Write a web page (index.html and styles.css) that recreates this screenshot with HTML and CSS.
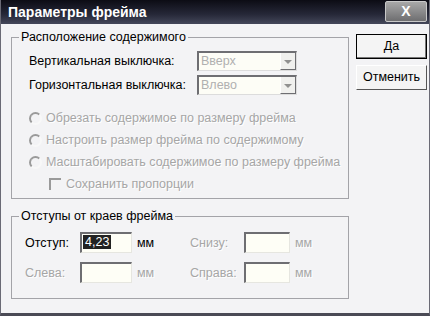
FILE: index.html
```html
<!DOCTYPE html>
<html lang="ru">
<head>
  <meta charset="UTF-8">
  <title>Параметры фрейма</title>
  <link rel="stylesheet" href="styles.css">
</head>
<body>
  <div class="window">
    <div class="titlebar">
      <span class="title">Параметры фрейма</span>
      <div class="close">X</div>
    </div>

    <div class="content">
      <div class="main">
        <fieldset class="group group-pos">
          <legend>Расположение содержимого</legend>
          <div class="row">
            <span class="label">Вертикальная выключка:</span>
            <div class="select"><span class="value">Вверх</span><span class="arrow"></span></div>
          </div>
          <div class="row">
            <span class="label">Горизонтальная выключка:</span>
            <div class="select"><span class="value">Влево</span><span class="arrow"></span></div>
          </div>
          <div class="option first"><span class="radio"></span>Обрезать содержимое по размеру фрейма</div>
          <div class="option"><span class="radio"></span>Настроить размер фрейма по содержимому</div>
          <div class="option"><span class="radio"></span>Масштабировать содержимое по размеру фрейма</div>
          <div class="option sub"><span class="check"></span>Сохранить пропорции</div>
        </fieldset>

        <fieldset class="group group-margins">
          <legend>Отступы от краев фрейма</legend>
          <div class="margins">
            <span class="active">Отступ:</span>
            <div class="field"><span class="sel">4,23</span></div>
            <span class="unit active">мм</span>
            <span>Снизу:</span>
            <div class="field"></div>
            <span class="unit">мм</span>

            <span>Слева:</span>
            <div class="field"></div>
            <span class="unit">мм</span>
            <span>Справа:</span>
            <div class="field"></div>
            <span class="unit">мм</span>
          </div>
        </fieldset>
      </div>

      <div class="buttons">
        <div class="btn default">Да</div>
        <div class="btn">Отменить</div>
      </div>
    </div>
  </div>
</body>
</html>
```

FILE: styles.css
```css
body {
  margin: 0;
  font-family: 'Liberation Sans', Arial, sans-serif;
  font-size: 12.5px;
  color: #000;
}

.window {
  width: 430px;
  height: 316px;
  box-sizing: border-box;
  background-color: #f3f3f5;
  border-bottom: 3px solid #4a4a55;
  border-left: 1px solid #6a6a75;
  border-right: 1px solid #6a6a75;
}

.titlebar {
  height: 24px;
  display: flex;
  align-items: center;
  justify-content: space-between;
  padding: 0 2px 0 7px;
  background: linear-gradient(#0c0c14, #262838 60%, #44475a);
}

.title {
  color: #fff;
  font-weight: bold;
  font-size: 14px;
}

.close {
  width: 40px;
  height: 19px;
  margin-top: -2px;
  border: 1px solid #c8c8c8;
  border-radius: 2px;
  background: linear-gradient(#a8a8a8, #6e6e70);
  color: #fff;
  font-weight: bold;
  font-size: 14px;
  text-align: center;
  line-height: 19px;
}

.content {
  display: flex;
  padding: 6px 0 0 10px;
}

.main {
  width: 338px;
}

.group {
  margin: 0;
  border: 1px solid #a3a3a8;
  padding: 0 0 0 17px;
}

.group legend {
  padding: 0 2px;
  margin-left: -10px;
  line-height: 15px;
}

.group-pos {
  height: 169px;
  box-sizing: border-box;
  padding-top: 6px;
}

.row {
  display: flex;
  align-items: center;
  height: 20px;
  margin-bottom: 4px;
}

.label {
  width: 168px;
}

.select {
  width: 100px;
  height: 20px;
  box-sizing: border-box;
  display: flex;
  border-top: 2px solid #6e6e72;
  border-left: 2px solid #6e6e72;
  border-right: 1px solid #dcdcdc;
  border-bottom: 1px solid #dcdcdc;
  background-color: #fdfdf6;
}

.value {
  flex: 1;
  color: #b0b0b0;
  padding-left: 2px;
  line-height: 17px;
}

.arrow {
  width: 14px;
  border-left: 1px solid #fff;
  border-bottom: 1px solid #6e6e72;
  border-right: 1px solid #6e6e72;
  background-color: #f0f0ee;
  position: relative;
}

.arrow::after {
  content: "";
  position: absolute;
  left: 3px;
  top: 7px;
  border-left: 4px solid transparent;
  border-right: 4px solid transparent;
  border-top: 4px solid #909090;
}

.option {
  display: flex;
  align-items: center;
  height: 22px;
  color: #a6a6a6;
  text-shadow: 1px 1px 0 #fff;
}

.option.first {
  margin-top: 12px;
}

.radio {
  width: 9px;
  height: 9px;
  border: 2px solid;
  border-color: #9a9a9a #f8f8f8 #f8f8f8 #9a9a9a;
  border-radius: 50%;
  margin: 0 4px 0 0;
}

.sub {
  padding-left: 20px;
}

.check {
  width: 10px;
  height: 10px;
  border-top: 2px solid #9a9a9a;
  border-left: 2px solid #9a9a9a;
  margin-right: 5px;
}

.group-margins {
  margin-top: 10px;
  height: 90px;
  box-sizing: border-box;
  padding-left: 13px;
  padding-top: 8px;
}

.group-margins legend {
  margin-left: -6px;
}

.margins {
  display: grid;
  grid-template-columns: 55px 52px 58px 54px 46px auto;
  grid-auto-rows: 21px;
  row-gap: 9px;
  align-items: center;
  color: #a6a6a6;
  text-shadow: 1px 1px 0 #fff;
}

.margins .active {
  color: #000;
  text-shadow: none;
}

.unit {
  padding-left: 5px;
}

.field {
  height: 21px;
  box-sizing: border-box;
  border-top: 2px solid #6e6e72;
  border-left: 2px solid #6e6e72;
  border-right: 1px solid #e6e6e0;
  border-bottom: 1px solid #e6e6e0;
  background-color: #fefef6;
  padding: 1px 0 0 1px;
}

.sel {
  background-color: #222;
  color: #fff;
  text-shadow: none;
  padding: 0 2px;
}

.buttons {
  display: flex;
  flex-direction: column;
  gap: 6px;
  padding: 4px 0 0 7px;
}

.btn {
  width: 71px;
  height: 25px;
  box-sizing: border-box;
  border: 1px solid #fff;
  border-right-color: #555;
  border-bottom-color: #555;
  background-color: #f4f4f4;
  text-align: center;
  line-height: 22px;
}

.btn.default {
  border: 1px solid #000;
  box-shadow: inset -1px -1px 0 #777;
}
```
